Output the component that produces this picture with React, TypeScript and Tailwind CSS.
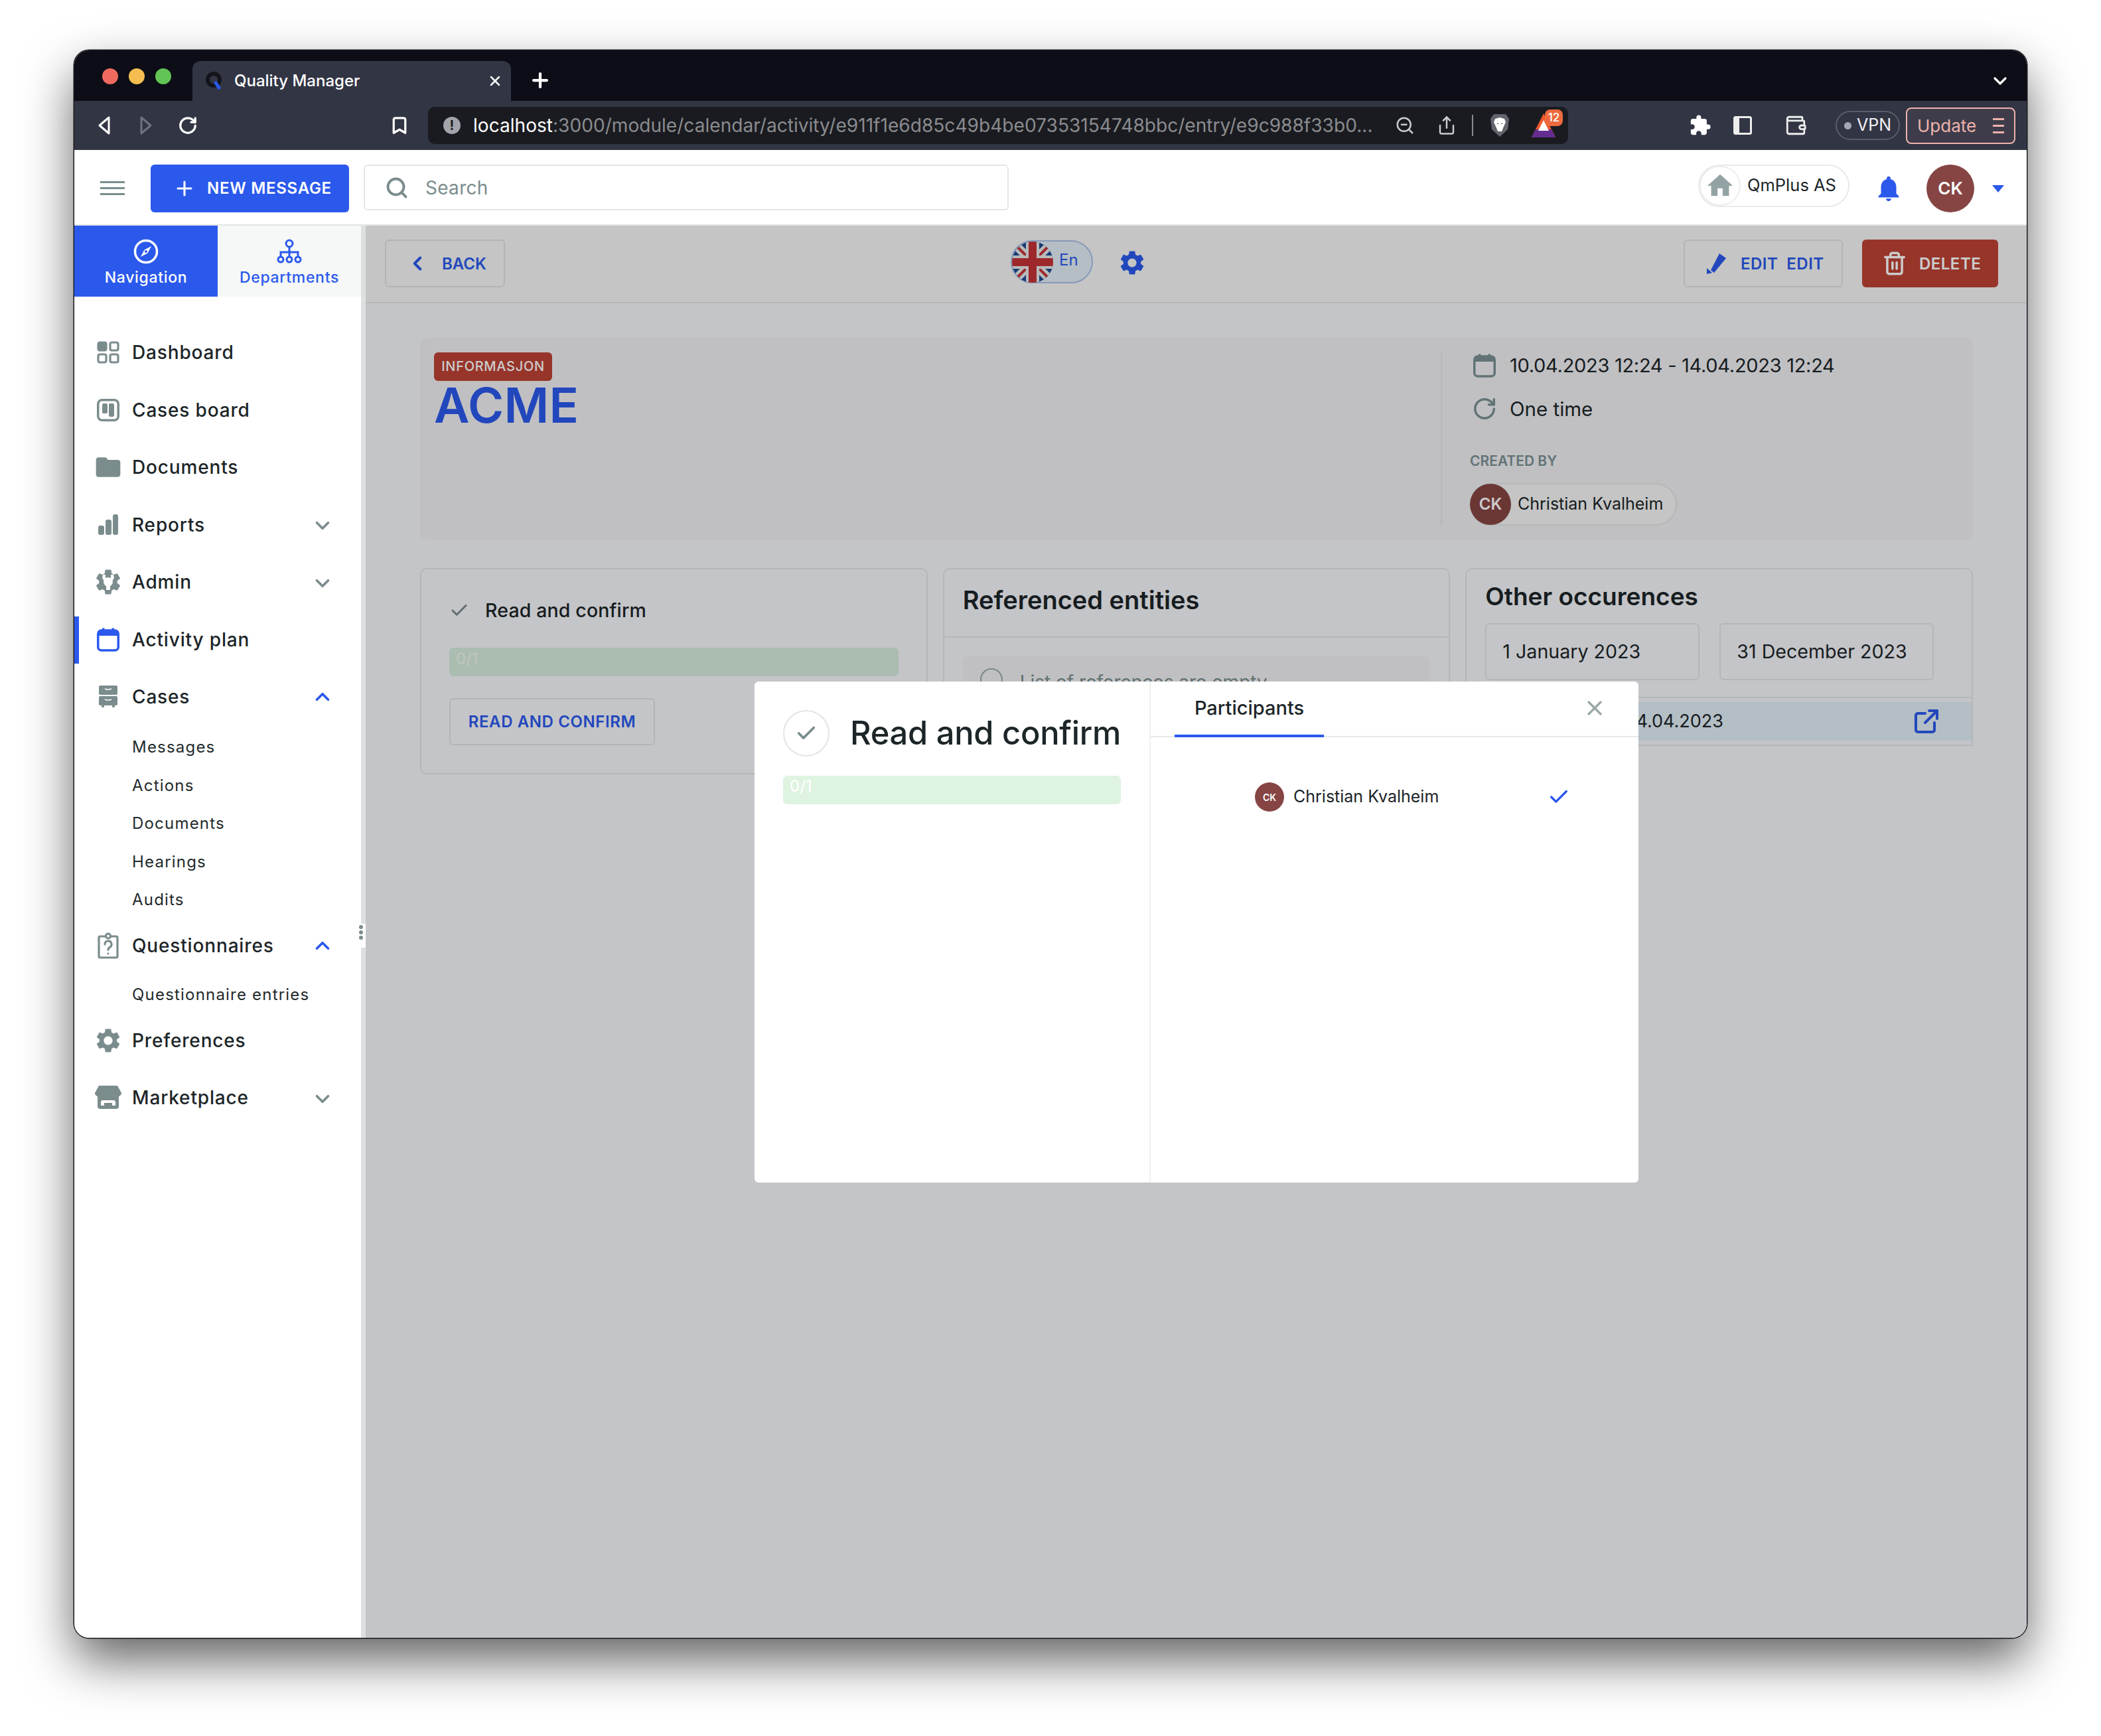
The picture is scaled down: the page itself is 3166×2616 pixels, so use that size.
import React from "react";
import { Check, ChevronDown, ChevronLeft, ChevronUp, Plus, RotateCw, Search, Share, X, ZoomOut, Bookmark, Wallet, Trash2 } from "lucide-react";
import { MdSettings, MdHome, MdNotifications, MdFolder, MdExtension } from "react-icons/md";

const GREY = "#7b8c8d";

function Compass() {
  return (
    <svg width="38" height="38" viewBox="0 0 38 38" fill="none">
      <circle cx="19" cy="19" r="16.5" stroke="white" strokeWidth="3.5" />
      <path d="M27 11 L21.5 21.5 L11 27 L16.5 16.5 Z" fill="white" />
      <circle cx="19" cy="19" r="2" fill="#2b59ec" />
    </svg>
  );
}
function Org() {
  return (
    <svg width="38" height="38" viewBox="0 0 38 38" fill="none" stroke="#2b59ec" strokeWidth="3">
      <circle cx="19" cy="7" r="5" />
      <path d="M19 12V20M6 27V20H32V27M19 20V27" />
      <circle cx="6" cy="31" r="4" />
      <circle cx="19" cy="31" r="4" />
      <circle cx="32" cy="31" r="4" />
    </svg>
  );
}
function DashIcon() {
  return (
    <svg width="34" height="34" viewBox="0 0 34 34" fill="none" stroke={GREY} strokeWidth="3.2">
      <rect x="2" y="2" width="12" height="12" rx="2.5" fill={GREY} />
      <rect x="20" y="2" width="12" height="12" rx="2.5" />
      <rect x="2" y="20" width="12" height="12" rx="2.5" />
      <rect x="20" y="20" width="12" height="12" rx="2.5" />
    </svg>
  );
}
function BoardIcon() {
  return (
    <svg width="34" height="34" viewBox="0 0 34 34" fill="none">
      <rect x="1.75" y="1.75" width="30.5" height="30.5" rx="6" stroke={GREY} strokeWidth="3.5" />
      <rect x="8" y="7" width="8" height="15" rx="2" fill={GREY} />
      <rect x="18" y="7" width="8" height="20" rx="2" fill={GREY} />
    </svg>
  );
}
function BarsIcon() {
  return (
    <svg width="34" height="34" viewBox="0 0 34 34" fill={GREY}>
      <rect x="2" y="18" width="9" height="14" rx="3" />
      <rect x="13" y="9" width="9" height="23" rx="3" />
      <rect x="24" y="1" width="8" height="31" rx="3" />
    </svg>
  );
}
function AdminIcon() {
  return (
    <span className="relative flex items-center justify-center w-[40px] h-[40px]">
      <MdSettings size={46} color={GREY} className="shrink-0" />
      <svg className="absolute" width="18" height="24" viewBox="0 0 18 24" fill="white">
        <path d="M1 1 C-1 6 1 10 6 11 V24 H12 V11 C17 10 19 6 17 1 L13 1 V6 H5 V1 Z" />
      </svg>
    </span>
  );
}
function CalendarIcon({ color, w = 34, h = 36 }: { color: string; w?: number; h?: number }) {
  return (
    <svg width={w} height={h} viewBox="0 0 34 36" fill="none">
      <rect x="8" y="0.5" width="3.5" height="6" fill={color} />
      <rect x="22.5" y="0.5" width="3.5" height="6" fill={color} />
      <rect x="1.75" y="4" width="30.5" height="30" rx="5" stroke={color} strokeWidth="3.5" />
      <path d="M2 8a4 4 0 0 1 4-4h22a4 4 0 0 1 4 4v4H2z" fill={color} />
    </svg>
  );
}
function CabinetIcon() {
  return (
    <svg width="32" height="34" viewBox="0 0 32 34" fill={GREY}>
      <rect x="2" y="0" width="28" height="14" rx="2" />
      <rect x="2" y="16" width="28" height="14" rx="2" />
      <rect x="6" y="30" width="4" height="3" rx="1" />
      <rect x="22" y="30" width="4" height="3" rx="1" />
      <path d="M11 5 Q16 7 21 5" stroke="white" strokeWidth="1.6" fill="none" />
      <path d="M11 21 Q16 23 21 21" stroke="white" strokeWidth="1.6" fill="none" />
    </svg>
  );
}
function ClipboardIcon() {
  return (
    <svg width="32" height="40" viewBox="0 0 32 40" fill="none" stroke={GREY} strokeWidth="3.2">
      <rect x="2" y="6" width="28" height="32" rx="2" />
      <circle cx="16" cy="5.5" r="3.5" fill="white" />
      <path d="M11 18a5 5 0 1 1 7.5 4.3c-1.6 1-2.5 2-2.5 4" strokeLinecap="round" />
      <circle cx="16" cy="32" r="1.6" fill={GREY} stroke="none" />
    </svg>
  );
}
function StoreIcon() {
  return (
    <svg width="42" height="36" viewBox="0 0 42 36" fill={GREY}>
      <path d="M7 0H35L41 11C41 15 37 17 34 16 31 17 26 17 21 16 16 17 11 17 8 16 5 17 1 15 1 11Z" />
      <path fillRule="evenodd" d="M5 16H37V31a4 4 0 0 1-4 4H9a4 4 0 0 1-4-4ZM13 22a3 3 0 0 0-3 3V30H15V26H27V30H32V25a3 3 0 0 0-3-3Z" />
    </svg>
  );
}
function UkFlag() {
  return (
    <span className="w-[62px] h-[62px] rounded-full overflow-hidden shrink-0 block">
      <svg width="62" height="62" viewBox="0 0 62 62">
        <rect width="62" height="62" fill="#1f4a94" />
        <path d="M0 0L62 62M62 0L0 62" stroke="#e8e8e8" strokeWidth="13" />
        <path d="M0 0L62 62M62 0L0 62" stroke="#c43338" strokeWidth="4" />
        <path d="M31 0V62M0 31H62" stroke="#e8e8e8" strokeWidth="20" />
        <path d="M31 0V62M0 31H62" stroke="#c43338" strokeWidth="12" />
      </svg>
    </span>
  );
}
function Pencil() {
  return (
    <svg width="32" height="34" viewBox="0 0 32 34" fill="#2b59ec">
      <path d="M20 2 L30 9 L12 31 L7 27Z" />
      <path d="M1 24 L9 31 L1 33 Z" />
    </svg>
  );
}
function Avatar({ size, text, cls, color }: { size: string; text: string; cls: string; color: string }) {
  return (
    <span className={`${size} ${cls} rounded-full flex items-center justify-center shrink-0 font-semibold`} style={{ backgroundColor: color }}>
      {text}
    </span>
  );
}

type Row = {
  label: string;
  icon: React.ReactNode;
  h: string;
  chevron?: "up" | "down";
  active?: boolean;
  sub?: boolean;
  extra?: string;
};

const rows: Row[] = [
  { label: "Dashboard", icon: <DashIcon />, h: "h-[86.5px]" },
  { label: "Cases board", icon: <BoardIcon />, h: "h-[86.5px]" },
  { label: "Documents", icon: <MdFolder size={44} color={GREY} />, h: "h-[86.5px]" },
  { label: "Reports", icon: <BarsIcon />, h: "h-[86.5px]", chevron: "down" },
  { label: "Admin", icon: <AdminIcon />, h: "h-[86.5px]", chevron: "down" },
  { label: "Activity plan", icon: <CalendarIcon color="#2b59ec" />, h: "h-[86.5px]", active: true },
  { label: "Cases", icon: <CabinetIcon />, h: "h-[86.5px]", chevron: "up" },
  { label: "Messages", icon: null, h: "h-[57.5px]", sub: true, extra: "mt-[4px]" },
  { label: "Actions", icon: null, h: "h-[57.5px]", sub: true },
  { label: "Documents", icon: null, h: "h-[57.5px]", sub: true },
  { label: "Hearings", icon: null, h: "h-[57.5px]", sub: true },
  { label: "Audits", icon: null, h: "h-[57.5px]", sub: true },
  { label: "Questionnaires", icon: <ClipboardIcon />, h: "h-[80px]", chevron: "up" },
  { label: "Questionnaire entries", icon: null, h: "h-[57px]", sub: true, extra: "mt-[5px]" },
  { label: "Preferences", icon: <MdSettings size={44} color={GREY} />, h: "h-[82px]" },
  { label: "Marketplace", icon: <StoreIcon />, h: "h-[90px]", chevron: "down" },
];

function Sidebar() {
  return (
    <aside className="w-[432px] shrink-0 flex flex-col bg-white">
      <div className="flex h-[107px] shrink-0">
        <div className="w-[216px] bg-[#2b59ec] text-white flex flex-col items-center pt-[20px]">
          <Compass />
          <span className="text-[23px] font-medium mt-[5px] leading-[30px] tracking-[0.03em]">Navigation</span>
        </div>
        <div className="w-[216px] bg-[#f5f8f7] text-[#2b59ec] flex flex-col items-center pt-[20px]">
          <Org />
          <span className="text-[23px] font-medium mt-[5px] leading-[30px] tracking-[0.03em]">Departments</span>
        </div>
      </div>
      <nav className="pt-[41px] flex flex-col">
        {rows.map((r, i) => (
          <div key={i} className={`${r.h} ${r.extra ?? ""} relative flex items-center pl-[87px] shrink-0`}>
            {r.active && <span className="absolute left-0 top-[8px] w-[7px] h-[71px] bg-[#2b59ec]" />}
            {r.icon && (
              <span className="absolute left-[23px] w-[56px] flex items-center justify-center">{r.icon}</span>
            )}
            <span
              className={
                r.sub
                  ? "text-[24px] leading-none text-[#1f2a2c] tracking-[0.05em]"
                  : "text-[28px] leading-none font-medium text-[#1c2528] tracking-[0.03em]"
              }
            >
              {r.label}
            </span>
            {r.chevron === "down" && <ChevronDown className="absolute left-[357px] mt-[3px]" size={34} color={GREY} strokeWidth={2.6} />}
            {r.chevron === "up" && <ChevronUp className="absolute left-[357px]" size={34} color="#2b59ec" strokeWidth={2.6} />}
          </div>
        ))}
      </nav>
    </aside>
  );
}

function BrowserChrome() {
  return (
    <>
      <div className="h-[76px] shrink-0 bg-[#0c0d16] flex items-end text-white">
        <div className="flex items-center gap-[16px] pl-[42px] self-start mt-[27px]">
          <span className="w-[24px] h-[24px] rounded-full bg-[#ee6a5f]" />
          <span className="w-[24px] h-[24px] rounded-full bg-[#f5bd4f]" />
          <span className="w-[24px] h-[24px] rounded-full bg-[#61c454]" />
        </div>
        <div className="ml-[32px] w-[480px] h-[60px] rounded-t-[12px] bg-[#323544] flex items-center pl-[20px] pr-[12px]">
          <svg width="26" height="30" viewBox="0 0 26 30" fill="none">
            <circle cx="12" cy="13" r="9" stroke="#14151c" strokeWidth="6" />
            <path d="M14 16L21 27" stroke="#2b59ec" strokeWidth="5" />
          </svg>
          <span className="ml-[17px] text-[24px] font-medium">Quality Manager</span>
          <X className="ml-auto" size={24} strokeWidth={2.5} />
        </div>
        <Plus className="ml-[27px] mb-[14px]" size={34} strokeWidth={3} />
        <ChevronDown className="ml-auto mr-[24px] mb-[14px]" size={32} strokeWidth={2.5} />
      </div>
      <div className="h-[74px] shrink-0 bg-[#323544] flex items-center text-white">
        <span className="ml-[13px] w-[63px] flex justify-center">
          <svg width="22" height="30" viewBox="0 0 22 30" fill="none" stroke="white" strokeWidth="3" strokeLinejoin="round"><path d="M18 3V27L4 15Z" /></svg>
        </span>
        <span className="w-[63px] flex justify-center">
          <svg width="22" height="30" viewBox="0 0 22 30" fill="none" stroke="#6f7280" strokeWidth="3" strokeLinejoin="round"><path d="M4 3V27L18 15Z" /></svg>
        </span>
        <span className="w-[64px] flex justify-center">
          <RotateCw size={30} strokeWidth={2.6} />
        </span>
        <span className="ml-[256px] w-[62px] flex justify-center">
          <Bookmark size={30} strokeWidth={2.6} />
        </span>
        <div className="ml-[12px] w-[1718px] h-[56px] rounded-[10px] bg-[#1a1b20] flex items-center pl-[23px]">
          <span className="w-[26px] h-[26px] rounded-full bg-[#a1a4ab] text-[#1a1b20] text-[20px] font-bold flex items-center justify-center">!</span>
          <span className="ml-[19px] text-[28.1px] text-[#8a8b8f] whitespace-nowrap w-[1352px]">
            <span className="text-white">localhost</span>:3000/module/calendar/activity/e911f1e6d85c49b4be07353154748bbc/entry/e9c988f33b0...
          </span>
          <ZoomOut className="ml-[37px]" size={30} color="#c9cacc" strokeWidth={2} />
          <Share className="ml-[33px]" size={30} color="#c9cacc" strokeWidth={2} />
          <span className="ml-[23px] w-[2px] h-[32px] bg-[#8a8b8f]" />
          <svg className="ml-[25px]" width="30" height="36" viewBox="0 0 30 36">
            <path d="M6 1H24L29 8 27 24 15 35 3 24 1 8Z" fill="#62646e" />
            <path d="M8 8L15 6 22 8 24 13 20 22 18 27H12L10 22 6 13Z" fill="white" />
            <path d="M11 14L14 16H11ZM19 14L16 16H19Z" fill="#62646e" />
          </svg>
          <span className="relative ml-[33px] w-[36px] h-[36px] block">
            <svg width="36" height="36" viewBox="0 0 36 36">
              <path d="M18 0L36 36H0Z" fill="#f05a2b" />
              <path d="M6 24H30L36 36H0Z" fill="#662d91" />
              <path d="M18 10L26 26H10Z" fill="white" />
            </svg>
            <span className="absolute -top-[6px] left-[20px] w-[27px] h-[25px] rounded-[8px] bg-[#ec6a3e] text-white text-[17px] font-medium flex items-center justify-center">12</span>
          </span>
        </div>
        <MdExtension className="ml-[182px]" size={34} color="white" />
        <svg className="ml-[33px]" width="28" height="28" viewBox="0 0 28 28">
          <rect x="1.5" y="1.5" width="25" height="25" rx="2" fill="none" stroke="#ededed" strokeWidth="3" />
          <rect x="1" y="1" width="8" height="26" fill="#ededed" />
        </svg>
        <Wallet className="ml-[49px]" size={34} strokeWidth={2} color="#ededed" />
        <div className="ml-[43px] w-[97px] h-[44px] rounded-full border-2 border-[#5a5d6b] flex items-center justify-center gap-[8px]">
          <span className="w-[11px] h-[11px] rounded-full bg-[#a4a7b3]" />
          <span className="text-[25px] text-[#f2f2f2]">VPN</span>
        </div>
        <div className="ml-[9px] w-[165px] h-[55px] rounded-[8px] border-2 border-[#eeb3ac] bg-[#3e3c4a] flex items-center justify-between px-[15px]">
          <span className="text-[26px] text-[#eeb3ac]">Update</span>
          <span className="flex flex-col gap-[7px]">
            <span className="w-[17px] h-[3px] bg-[#eeb3ac]" />
            <span className="w-[17px] h-[3px] bg-[#eeb3ac]" />
            <span className="w-[17px] h-[3px] bg-[#eeb3ac]" />
          </span>
        </div>
      </div>
    </>
  );
}

function AppHeader() {
  return (
    <header className="h-[114px] shrink-0 bg-white border-b-2 border-[#e2e5e5] flex items-center pt-[3px]">
      <div className="w-[115px] flex justify-center">
        <span className="flex flex-col gap-[6px]">
          <span className="block w-[37px] h-[3px] bg-[#7b8c8d]" />
          <span className="block w-[37px] h-[3px] bg-[#7b8c8d]" />
          <span className="block w-[37px] h-[3px] bg-[#7b8c8d]" />
        </span>
      </div>
      <button className="w-[299px] h-[72px] rounded-[6px] bg-[#2b59ec] text-white flex items-center pl-[34px]">
        <Plus size={34} strokeWidth={2.2} />
        <span className="ml-[17px] text-[24px] font-semibold tracking-[0.03em]">NEW MESSAGE</span>
      </button>
      <div className="ml-[22px] w-[972px] h-[69px] rounded-[6px] border-2 border-[#e5e7e7] flex items-center pl-[30px] -mt-[2px]">
        <Search size={36} color={GREY} strokeWidth={2.6} />
        <span className="ml-[25px] text-[28px] text-[#7b8c8d] tracking-[0.01em]">Search</span>
      </div>
      <div className="ml-auto flex items-center pr-[34px]">
        <div className="w-[228px] h-[64px] rounded-full border-2 border-[#e8eaea] flex items-center -mt-[7px]">
          <span className="w-[62px] h-[60px] rounded-full border-2 border-[#eceeee] flex items-center justify-center shrink-0">
            <MdHome size={46} color="#93a3a4" />
          </span>
          <span className="ml-[10px] text-[25.5px] text-[#1c2528] -mt-[2px]">QmPlus AS</span>
        </div>
        <MdNotifications className="ml-[36px]" size={46} color="#2b59ec" />
        <Avatar size="w-[72px] h-[72px] ml-[34px]" text="CK" cls="text-white text-[26px]" color="#864543" />
        <svg className="ml-[27px]" width="18" height="12" viewBox="0 0 18 12" fill="#2b59ec"><path d="M0 1H18L9 12Z" /></svg>
      </div>
    </header>
  );
}

function ContentUnder() {
  return (
    <div className="absolute inset-0 bg-[#f6f7fa] flex flex-col">
      <div className="h-[117px] shrink-0 bg-[#f5f7f6] border-b-2 border-[#e2e5e5] flex items-center pl-[29px] pr-[43px] pb-[1px]">
        <button className="w-[181px] h-[72px] rounded-[6px] border-2 border-[#dfe3e3] flex items-center pl-[30px] text-[#2b59ec]">
          <ChevronLeft size={34} strokeWidth={2.8} />
          <span className="ml-[20px] text-[24px] font-semibold mt-[2px]">BACK</span>
        </button>
        <div className="ml-[762px] w-[124px] h-[65px] rounded-full border-2 border-[#a9c0ea] bg-[#e3eef6] flex items-center -mt-[5px]">
          <UkFlag />
          <span className="ml-[9px] text-[24px] text-[#2b59ec] -mt-[5px]">En</span>
        </div>
        <MdSettings className="ml-[37px] -mt-[3px]" size={44} color="#2b59ec" />
        <button className="ml-auto w-[240px] h-[72px] rounded-[6px] border-2 border-[#dfe3e3] flex items-center pl-[32px] text-[#2b59ec]">
          <Pencil />
          <span className="ml-[20px] text-[24px] font-semibold tracking-[0.02em] whitespace-pre mt-[1px]">EDIT  EDIT</span>
        </button>
        <button className="ml-[29px] w-[205px] h-[72px] rounded-[6px] bg-[#bd4335] text-white flex items-center pl-[30px]">
          <Trash2 size={38} strokeWidth={2.2} />
          <span className="ml-[18px] text-[24px] font-semibold tracking-[0.02em] mt-[1px]">DELETE</span>
        </button>
      </div>
      <div className="pl-[82px] pr-[81px]">
        <section className="mt-[52px] h-[304px] rounded-[10px] bg-[#f0f1f4] flex">
          <div className="flex-1 pl-[21px] pt-[22px]">
            <span className="block w-[178px] h-[43px] rounded-[6px] bg-[#bd4335] text-white text-[20px] font-medium tracking-[0.035em] leading-[43px] text-center">INFORMASJON</span>
            <h1 className="text-[73.5px] leading-[72px] font-semibold text-[#2b59ec] tracking-[0.005em] mt-[1px]">ACME</h1>
          </div>
          <div className="w-[802px] mt-[22px] mb-[21px] border-l-2 border-[#e2e4e7] pl-[42px]">
            <div className="flex items-center h-[40px]">
              <span className="ml-[2px] w-[40px] flex justify-center shrink-0"><CalendarIcon color="#7b9093" /></span>
              <span className="ml-[18px] text-[29px] text-[#1c2528] -tracking-[0.01em]">10.04.2023 12:24 - 14.04.2023 12:24</span>
            </div>
            <div className="flex items-center h-[40px] mt-[25px]">
              <span className="ml-[2px] w-[40px] flex justify-center shrink-0"><RotateCw size={38} strokeWidth={2.2} color="#7b9093" /></span>
              <span className="ml-[18px] text-[29.5px] text-[#1c2528]">One time</span>
            </div>
            <div className="mt-[46px] text-[21px] leading-[26px] font-semibold text-[#7b9093]">CREATED BY</div>
            <div className="mt-[20px] w-[312px] h-[64px] rounded-full border-2 border-[#e2e5e5] bg-[#f5f7f6] flex items-center">
              <Avatar size="w-[62px] h-[62px] -ml-[2px]" text="CK" cls="text-white text-[24px]" color="#864543" />
              <span className="ml-[10px] text-[25px] text-[#1c2528]">Christian Kvalheim</span>
            </div>
          </div>
        </section>
        <div className="mt-[43px] grid grid-cols-3 gap-[23px] items-start">
          <section className="h-[311px] rounded-[10px] border-2 border-[#e2e5e5] px-[42px]">
            <div className="flex items-center mt-[39px] h-[46px]">
              <Check size={30} color="#7b8c8d" strokeWidth={2.5} />
              <span className="ml-[24px] text-[28.5px] font-medium text-[#1c2528] tracking-[0.005em]">Read and confirm</span>
            </div>
            <div className="mt-[33px] h-[43px] rounded-[6px] bg-[#d6ecdc] px-[10px] text-[24px] leading-[34px] text-[#f0f7f2]">0/1</div>
            <button className="mt-[33px] w-[310px] h-[71px] rounded-[6px] border-2 border-[#dfe3e3] text-[24px] font-semibold text-[#2b59ec] tracking-[0.025em]">READ AND CONFIRM</button>
          </section>
          <section className="h-[500px] rounded-[10px] border-2 border-[#e2e5e5]">
            <div className="h-[103px] border-b-2 border-[#e2e5e5] pl-[28px] pt-[22px] text-[38px] font-semibold text-[#1c2528] leading-[48px]">Referenced entities</div>
            <div className="mx-[28px] mt-[28px] h-[120px] rounded-[6px] bg-[#f0f1f4] flex items-start pt-[18px] pl-[26px]">
              <span className="w-[34px] h-[34px] rounded-full border-2 border-[#9aa7a8]" />
              <span className="ml-[26px] text-[28px] text-[#7b8c8d]">List of references are empty</span>
            </div>
          </section>
          <section className="h-[268px] rounded-t-[10px] border-2 border-b-0 border-[#e2e5e5] relative">
            <div className="pl-[28px] pt-[17px] text-[37px] font-semibold text-[#1c2528] leading-[48px]">Other occurences</div>
            <div className="flex gap-[30px] pl-[28px] mt-[16px]">
              <div className="w-[323px] h-[86px] rounded-[6px] border-2 border-[#e2e5e5] pl-[24px] flex items-center text-[28.6px] text-[#1c2528]">1 January 2023</div>
              <div className="w-[323px] h-[86px] rounded-[6px] border-2 border-[#e2e5e5] pl-[24px] flex items-center text-[28.6px] text-[#1c2528]">31 December 2023</div>
            </div>
            <div className="mt-[25px] border-t-2 border-[#e2e5e5] pt-[6px] pb-[6px] border-b-2">
              <div className="h-[58px] bg-[#e2eef7] flex items-center justify-end pr-[50px] text-[27px] text-[#1c2528]">
                <span className="mr-[288px]">10.04.2023 - 14.04.2023</span>
                <svg width="36" height="36" viewBox="0 0 36 36" fill="none" stroke="#2b59ec" strokeWidth="4" strokeLinecap="round" strokeLinejoin="round">
                  <path d="M30 20V31a3 3 0 0 1-3 3H5a3 3 0 0 1-3-3V9a3 3 0 0 1 3-3H16" />
                  <path d="M22 2H34V14M34 2L16 20" />
                </svg>
              </div>
            </div>
          </section>
        </div>
      </div>
    </div>
  );
}

function Modal() {
  return (
    <div className="absolute left-[586px] top-[687px] w-[1332px] h-[755px] rounded-[6px] bg-white flex overflow-hidden">
      <div className="w-[597px] shrink-0 px-[43px] pt-[43px] border-r-2 border-[#eef0f0]">
        <div className="flex items-center h-[70px]">
          <span className="w-[70px] h-[70px] rounded-full border-2 border-[#e2e5e5] flex items-center justify-center shrink-0">
            <Check size={34} color="#7b8c8d" strokeWidth={2.6} />
          </span>
          <h2 className="ml-[31px] text-[48.8px] font-medium text-[#1c2528] whitespace-nowrap leading-none -tracking-[0.005em]">Read and confirm</h2>
        </div>
        <div className="mt-[29px] h-[43px] rounded-[6px] bg-[#dff3e1] px-[10px] text-[24px] leading-[32px] text-white">0/1</div>
      </div>
      <div className="flex-1 relative">
        <div className="h-[84px] border-b-2 border-[#e8eaea] pl-[36px]">
          <div className="w-[225px] h-[84px] border-b-[4px] border-[#2b59ec] flex justify-center pt-[22px] text-[29px] leading-[36px] font-medium text-[#1c2528]">Participants</div>
        </div>
        <X className="absolute right-[48px] top-[22px]" size={36} color="#9aa8a9" strokeWidth={2.2} />
        <div className="flex items-center mt-[68px] pl-[157px]">
          <Avatar size="w-[44px] h-[44px]" text="CK" cls="text-white text-[14px]" color="#864543" />
          <span className="ml-[14px] text-[25px] text-[#1c2528]">Christian Kvalheim</span>
          <Check className="ml-[164px]" size={34} color="#2b59ec" strokeWidth={2.4} />
        </div>
      </div>
    </div>
  );
}

export default function App() {
  return (
    <div className="w-[3166px] h-[2616px] bg-white pt-[76px] pl-[112px] overflow-hidden" style={{ fontFamily: "Inter, 'Noto Sans', sans-serif" }}>
      <div className="w-[2942px] h-[2392px] rounded-[22px] overflow-hidden flex flex-col bg-white shadow-[0_0_0_1.5px_#1a1a1e,0_34px_76px_rgba(0,0,0,0.62)]">
        <BrowserChrome />
        <AppHeader />
        <div className="flex-1 flex min-h-0">
          <Sidebar />
          <div className="relative w-[7px] shrink-0 bg-[#dde0e1]">
            <span className="absolute -left-[4px] top-[1052px] w-[11px] h-[36px] bg-white" />
            <span className="absolute -left-[3px] top-[1054px] flex flex-col gap-[2px]">
              <span className="w-[6px] h-[6px] rounded-full bg-[#7b8c8d]" />
              <span className="w-[6px] h-[6px] rounded-full bg-[#7b8c8d]" />
              <span className="w-[6px] h-[6px] rounded-full bg-[#7b8c8d]" />
            </span>
          </div>
          <main className="relative flex-1 overflow-hidden">
            <ContentUnder />
            <div className="absolute inset-0 bg-black/20" />
            <Modal />
          </main>
        </div>
      </div>
    </div>
  );
}
